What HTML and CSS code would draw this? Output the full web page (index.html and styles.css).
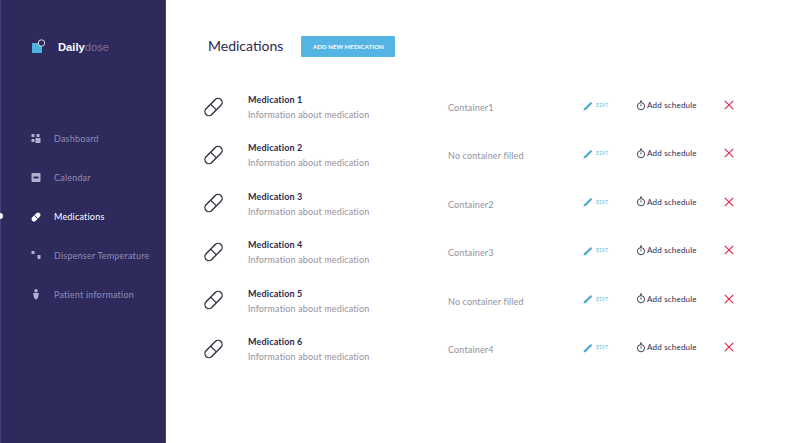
FILE: index.html
```html
<!DOCTYPE html>
<html lang="en">
<head>
    <meta charset="UTF-8">
    <title>Medications - Dailydose</title>
    <link rel="stylesheet" href="styles.css">
</head>
<body>
    <!-- Sidebar -->
    <div class="sidebar">
        <div class="logo">
            <svg class="logo-mark" width="15" height="15" viewBox="0 0 15 15">
                <rect x="0" y="4" width="10" height="10" fill="#4fb3e2"/>
                <circle cx="9.5" cy="4" r="3.2" fill="#2f2a5c" stroke="#d6d4e6" stroke-width="1"/>
            </svg>
            <span class="logo-text"><b>Daily</b>dose</span>
        </div>
        <div class="nav">
            <a href="#" class="nav-item">
                <svg width="9" height="9" viewBox="0 0 9 9" fill="#b3afd0"><rect x="0" y="0" width="3" height="3"/><rect x="5" y="0" width="3" height="3"/><rect x="0" y="5" width="3" height="3"/><rect x="4" y="4" width="5" height="5"/></svg>
                Dashboard
            </a>
            <a href="#" class="nav-item">
                <svg width="9" height="9" viewBox="0 0 9 9"><rect width="9" height="9" rx="1" fill="#b3afd0"/><rect x="2" y="3.5" width="5" height="2" fill="#2f2a5c"/></svg>
                Calendar
            </a>
            <a href="#" class="nav-item active">
                <svg width="10" height="10" viewBox="0 0 10 10"><rect x="-0.2" y="2.6" width="10.4" height="4.8" rx="2.4" fill="#fff" transform="rotate(-45 5 5)"/><path d="M3.4 3.4l3.2 3.2" stroke="#2f2a5c" stroke-width="1"/></svg>
                Medications
            </a>
            <a href="#" class="nav-item">
                <svg width="9" height="9" viewBox="0 0 9 9" fill="#b3afd0"><rect x="0" y="0" width="3" height="3"/><rect x="6" y="4" width="3" height="4"/></svg>
                Dispenser Temperature
            </a>
            <a href="#" class="nav-item">
                <svg width="9" height="11" viewBox="0 0 9 11" fill="#b3afd0"><circle cx="4.5" cy="1.8" r="1.8"/><path d="M1.5 4h6l-1 4.5-2 2.5-2-2.5z"/></svg>
                Patient information
            </a>
        </div>
    </div>

    <!-- Content -->
    <div class="content">
        <div class="header">
            <h1>Medications</h1>
            <button class="add-btn">ADD NEW MEDICATION</button>
        </div>

        <div class="med-list">
            <div class="med-row">
                <svg class="pill" width="20" height="20" viewBox="0 0 20 20"><use href="#pill-icon"/></svg>
                <div class="med-info"><h3>Medication 1</h3><p>Information about medication</p></div>
                <div class="container-name">Container1</div>
                <a href="#" class="edit"><svg width="11" height="11" viewBox="0 0 11 11"><use href="#pencil-icon"/></svg>EDIT</a>
                <a href="#" class="schedule"><svg width="10" height="11" viewBox="0 0 10 11"><use href="#timer-icon"/></svg>Add schedule</a>
                <svg class="remove" width="10" height="10" viewBox="0 0 10 10"><use href="#x-icon"/></svg>
            </div>
            <div class="med-row">
                <svg class="pill" width="20" height="20" viewBox="0 0 20 20"><use href="#pill-icon"/></svg>
                <div class="med-info"><h3>Medication 2</h3><p>Information about medication</p></div>
                <div class="container-name">No container filled</div>
                <a href="#" class="edit"><svg width="11" height="11" viewBox="0 0 11 11"><use href="#pencil-icon"/></svg>EDIT</a>
                <a href="#" class="schedule"><svg width="10" height="11" viewBox="0 0 10 11"><use href="#timer-icon"/></svg>Add schedule</a>
                <svg class="remove" width="10" height="10" viewBox="0 0 10 10"><use href="#x-icon"/></svg>
            </div>
            <div class="med-row">
                <svg class="pill" width="20" height="20" viewBox="0 0 20 20"><use href="#pill-icon"/></svg>
                <div class="med-info"><h3>Medication 3</h3><p>Information about medication</p></div>
                <div class="container-name">Container2</div>
                <a href="#" class="edit"><svg width="11" height="11" viewBox="0 0 11 11"><use href="#pencil-icon"/></svg>EDIT</a>
                <a href="#" class="schedule"><svg width="10" height="11" viewBox="0 0 10 11"><use href="#timer-icon"/></svg>Add schedule</a>
                <svg class="remove" width="10" height="10" viewBox="0 0 10 10"><use href="#x-icon"/></svg>
            </div>
            <div class="med-row">
                <svg class="pill" width="20" height="20" viewBox="0 0 20 20"><use href="#pill-icon"/></svg>
                <div class="med-info"><h3>Medication 4</h3><p>Information about medication</p></div>
                <div class="container-name">Container3</div>
                <a href="#" class="edit"><svg width="11" height="11" viewBox="0 0 11 11"><use href="#pencil-icon"/></svg>EDIT</a>
                <a href="#" class="schedule"><svg width="10" height="11" viewBox="0 0 10 11"><use href="#timer-icon"/></svg>Add schedule</a>
                <svg class="remove" width="10" height="10" viewBox="0 0 10 10"><use href="#x-icon"/></svg>
            </div>
            <div class="med-row">
                <svg class="pill" width="20" height="20" viewBox="0 0 20 20"><use href="#pill-icon"/></svg>
                <div class="med-info"><h3>Medication 5</h3><p>Information about medication</p></div>
                <div class="container-name">No container filled</div>
                <a href="#" class="edit"><svg width="11" height="11" viewBox="0 0 11 11"><use href="#pencil-icon"/></svg>EDIT</a>
                <a href="#" class="schedule"><svg width="10" height="11" viewBox="0 0 10 11"><use href="#timer-icon"/></svg>Add schedule</a>
                <svg class="remove" width="10" height="10" viewBox="0 0 10 10"><use href="#x-icon"/></svg>
            </div>
            <div class="med-row">
                <svg class="pill" width="20" height="20" viewBox="0 0 20 20"><use href="#pill-icon"/></svg>
                <div class="med-info"><h3>Medication 6</h3><p>Information about medication</p></div>
                <div class="container-name">Container4</div>
                <a href="#" class="edit"><svg width="11" height="11" viewBox="0 0 11 11"><use href="#pencil-icon"/></svg>EDIT</a>
                <a href="#" class="schedule"><svg width="10" height="11" viewBox="0 0 10 11"><use href="#timer-icon"/></svg>Add schedule</a>
                <svg class="remove" width="10" height="10" viewBox="0 0 10 10"><use href="#x-icon"/></svg>
            </div>
        </div>
    </div>

    <!-- Icons -->
    <svg class="icon-defs" width="0" height="0">
        <defs>
            <g id="pill-icon" fill="none" stroke="#2b2a3f" stroke-width="1.3">
                <rect x="0" y="6" width="21" height="8" rx="4" transform="rotate(-45 10.5 10)"/>
                <path d="M7.6 7.1l5.8 5.8"/>
            </g>
            <g id="pencil-icon" fill="#4fa9cf">
                <path d="M.5 10.5l.6-2.2L7.8 2l1.5 1.5-6.6 6.4z"/>
            </g>
            <g id="timer-icon" fill="none" stroke="#2b2a3f" stroke-width=".9">
                <circle cx="5" cy="6.2" r="3.6"/>
                <path d="M4 1h2M5 1v1.5M5 4.4v2"/>
            </g>
            <g id="x-icon" fill="none" stroke="#e0294f" stroke-width="1.2">
                <path d="M.8.8l8.4 8.4M9.2.8L.8 9.2"/>
            </g>
        </defs>
    </svg>
</body>
</html>
```

FILE: styles.css
```css
/* Main layout */
body {
    font-family: Lato, "Open Sans", sans-serif;
    margin: 0;
    padding: 0;
    height: 443px;
    overflow: hidden;
    display: flex;
    background-color: #fff;
    color: #2b2a4f;
}

a {
    text-decoration: none;
}

.icon-defs {
    display: none;
}

/* Sidebar */
.sidebar {
    width: 164px;
    flex-shrink: 0;
    background-color: #2f2a5c;
    border-left: 1px solid #45417a;
    border-right: 1px solid #45417a;
}

.logo {
    display: flex;
    align-items: center;
    height: 20px;
    margin: 36px 0 0 31px;
}

.logo-mark {
    margin-right: 11px;
}

.logo-text {
    padding-top: 1px;
    font-size: 11.2px;
    color: #77739c;
    font-family: "Liberation Sans", sans-serif;
}

.logo-text b {
    color: #fff;
}

.nav {
    display: flex;
    flex-direction: column;
    margin-top: 63px;
}

.nav-item {
    position: relative;
    display: flex;
    align-items: center;
    height: 39px;
    padding-left: 30px;
    font-size: 9px;
    letter-spacing: .2px;
    color: #8e8ab8;
}

.nav-item svg {
    width: 10px;
    margin-right: 13px;
}

.nav-item.active {
    color: #fff;
}

.nav-item.active::before {
    content: "";
    position: absolute;
    left: -4px;
    top: 16px;
    width: 6px;
    height: 6px;
    border-radius: 50%;
    background-color: #fff;
}

/* Content */
.content {
    flex: 1;
    padding: 35px 0 0 37px;
}

.header {
    display: flex;
    align-items: center;
    height: 22px;
}

.header h1 {
    margin: 0 18px 2px 5px;
    font-size: 14px;
    font-weight: 400;
    letter-spacing: 0;
    color: #2b2a4f;
}

.add-btn {
    width: 94px;
    height: 21px;
    padding: 0;
    border: none;
    border-radius: 1px;
    background-color: #54b5e4;
    color: #fff;
    font-family: inherit;
    font-size: 6.2px;
    font-weight: 700;
}

.med-list {
    margin-top: 25.4px;
}

.med-row {
    display: flex;
    align-items: center;
    height: 48.4px;
}

.pill {
    margin-right: 25px;
}

.med-info {
    width: 200px;
    padding-top: 1px;
}

.med-info h3 {
    margin: 0 0 4px;
    font-size: 9px;
    font-weight: 700;
    letter-spacing: .15px;
}

.med-info p {
    margin: 0;
    font-size: 9px;
    letter-spacing: .15px;
    color: #92929c;
}

.container-name {
    width: 135px;
    padding-top: 2px;
    font-size: 9px;
    letter-spacing: .15px;
    color: #92929c;
}

.edit {
    display: flex;
    align-items: center;
    width: 53px;
    margin-bottom: 3px;
    font-size: 5.5px;
    color: #70bcd9;
}

.edit svg {
    margin-right: 2px;
}

.schedule {
    display: flex;
    align-items: center;
    width: 88px;
    margin-bottom: 3px;
    font-size: 8px;
    letter-spacing: .2px;
    color: #2b2a4f;
}

.schedule svg {
    margin-right: 1px;
}

.remove {
    margin-bottom: 3px;
}
```
